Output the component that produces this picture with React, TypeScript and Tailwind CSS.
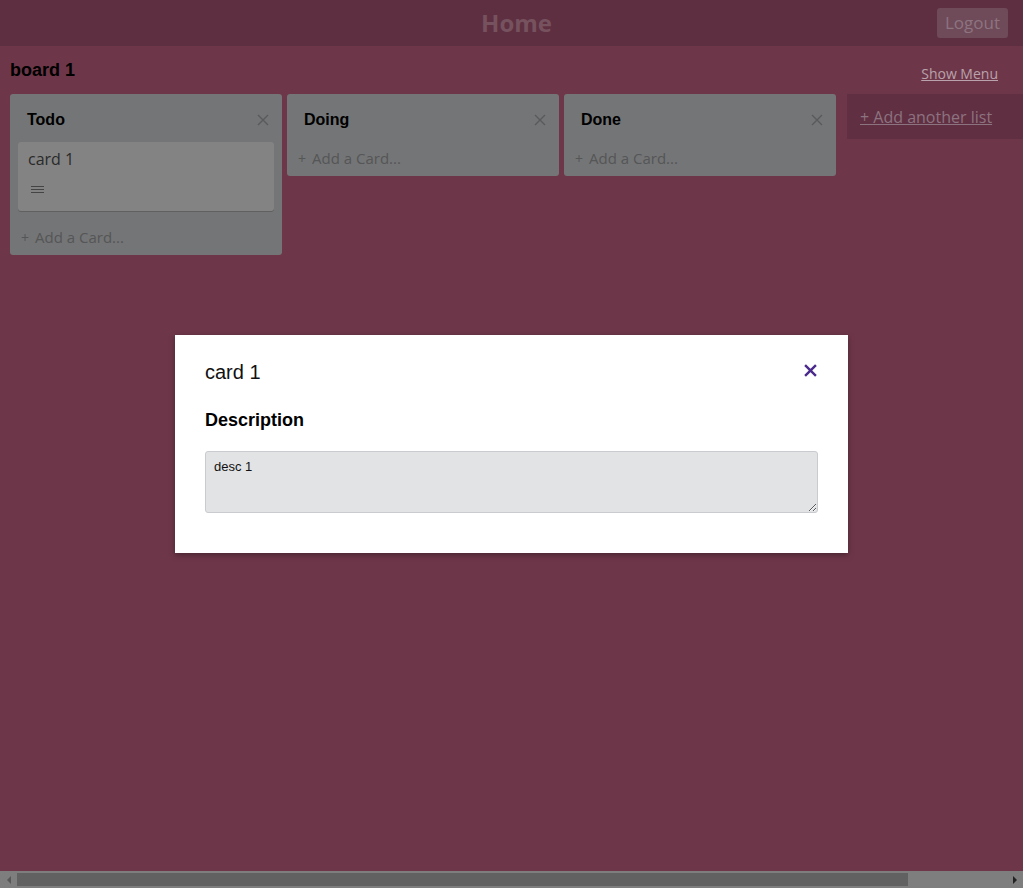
import React from "react";

type Card = { id: number; title: string };
type List = { id: number; title: string; cards: Card[] };

const lists: List[] = [
  { id: 1, title: "Todo", cards: [{ id: 1, title: "card 1" }] },
  { id: 2, title: "Doing", cards: [] },
  { id: 3, title: "Done", cards: [] },
];

const ui = "font-['Open_Sans','Noto_Sans',sans-serif]";
const arial = "font-['Liberation_Sans',Arial,sans-serif]";

function CloseIcon({ className }: { className?: string }) {
  return (
    <svg viewBox="0 0 12 12" className={className} fill="none" stroke="currentColor" strokeWidth={1.4}>
      <path d="M1 1 L11 11 M11 1 L1 11" />
    </svg>
  );
}

function ListColumn({ list }: { list: List }) {
  return (
    <div className="w-[272px] shrink-0 rounded-[3px] bg-[#747576]">
      <div className="flex h-[48px] items-center justify-between pl-[17px] pr-[13px] pt-[4px]">
        <span className={`${arial} text-[16px] font-bold text-black`}>{list.title}</span>
        <CloseIcon className="h-[12px] w-[12px] text-[#595a5b]" />
      </div>
      {list.cards.map((c) => (
        <div
          key={c.id}
          className="mx-[8px] mb-[10px] h-[69px] rounded-[3px] bg-[#838383] px-[10px] pt-[5px] shadow-[0_1px_0_#606061]"
        >
          <div className={`${ui} text-[16px] leading-[24px] text-[#2a2a2a]`}>{c.title}</div>
          <div className="mt-[15px] flex w-[13px] flex-col gap-[2px] pl-[3px]">
            <span className="h-px w-[13px] bg-[#444]" />
            <span className="h-px w-[13px] bg-[#444]" />
            <span className="h-px w-[13px] bg-[#444]" />
          </div>
        </div>
      ))}
      <div className={`${ui} flex h-[34px] items-center pb-[1px] pl-[11px] text-[15px] text-[#555657]`}>
        <span className="mr-[6px] text-[14px]">+</span>
        <span>Add a Card...</span>
      </div>
    </div>
  );
}

export default function App() {
  return (
    <div className="relative flex h-[888px] w-full flex-col overflow-hidden bg-[#6e3749]">
      <header className="grid h-[46px] shrink-0 grid-cols-3 items-center bg-[#5e2f40]">
        <div />
        <h1 className={`${ui} pl-[10px] text-center text-[24px] font-bold text-[#76525f]`}>Home</h1>
        <div className="flex justify-end pr-[15px]">
          <button className={`${ui} h-[30px] w-[71px] rounded-[3px] bg-[#6f4a59] text-[17px] text-[#8d7480]`}>
            Logout
          </button>
        </div>
      </header>

      <main className="flex-1 px-[10px]">
        <div className="flex h-[48px] items-center justify-between">
          <h2 className={`${arial} text-[18px] font-bold text-black`}>board 1</h2>
          <a className={`${ui} mr-[15px] mt-[6px] text-[14px] text-[#b9a2ac] underline`}>Show Menu</a>
        </div>
        <div className="flex items-start gap-[5px]">
          {lists.map((l) => (
            <ListColumn key={l.id} list={l} />
          ))}
          <div className="ml-[6px] flex h-[45px] w-[272px] shrink-0 items-center bg-[#612f42] pl-[13px]">
            <a className={`${ui} text-[16px] text-[#8c7380] underline`}>+ Add another list</a>
          </div>
        </div>
      </main>

      {/* horizontal scrollbar of the board */}
      <div className="flex h-[17px] shrink-0 items-center bg-[#7e7e7e]">
        <div className="flex w-[17px] items-center justify-center">
          <span className="h-0 w-0 border-y-[4px] border-r-[4px] border-y-transparent border-r-[#575757]" />
        </div>
        <div className="h-[13px] w-[891px] bg-[#616161]" />
        <div className="flex-1" />
        <div className="flex w-[17px] items-center justify-center">
          <span className="h-0 w-0 border-y-[4px] border-l-[4px] border-y-transparent border-l-[#232323]" />
        </div>
      </div>

      {/* card modal */}
      <div className="absolute inset-0 flex items-center justify-center">
        <div className="w-[673px] bg-white px-[30px] pb-[40px] pt-[24px] shadow-[0_2px_6px_rgba(0,0,0,0.35)]">
          <div className="flex h-[26px] items-center justify-between">
            <span className={`${arial} text-[20px] text-[#111]`}>card 1</span>
            <CloseIcon className="mb-[4px] mr-[1px] h-[13px] w-[13px] stroke-[2.2] text-[#4a2a8c]" />
          </div>
          <h3 className={`${arial} mt-[24px] h-[22px] text-[18px] font-bold leading-[22px] text-black`}>Description</h3>
          <textarea
            defaultValue="desc 1"
            className={`${arial} mt-[20px] block h-[62px] w-full rounded-[3px] border border-[#c9cbce] bg-[#e2e3e5] px-[8px] py-[5px] text-[13px] text-[#111] outline-none`}
          />
        </div>
      </div>
    </div>
  );
}
